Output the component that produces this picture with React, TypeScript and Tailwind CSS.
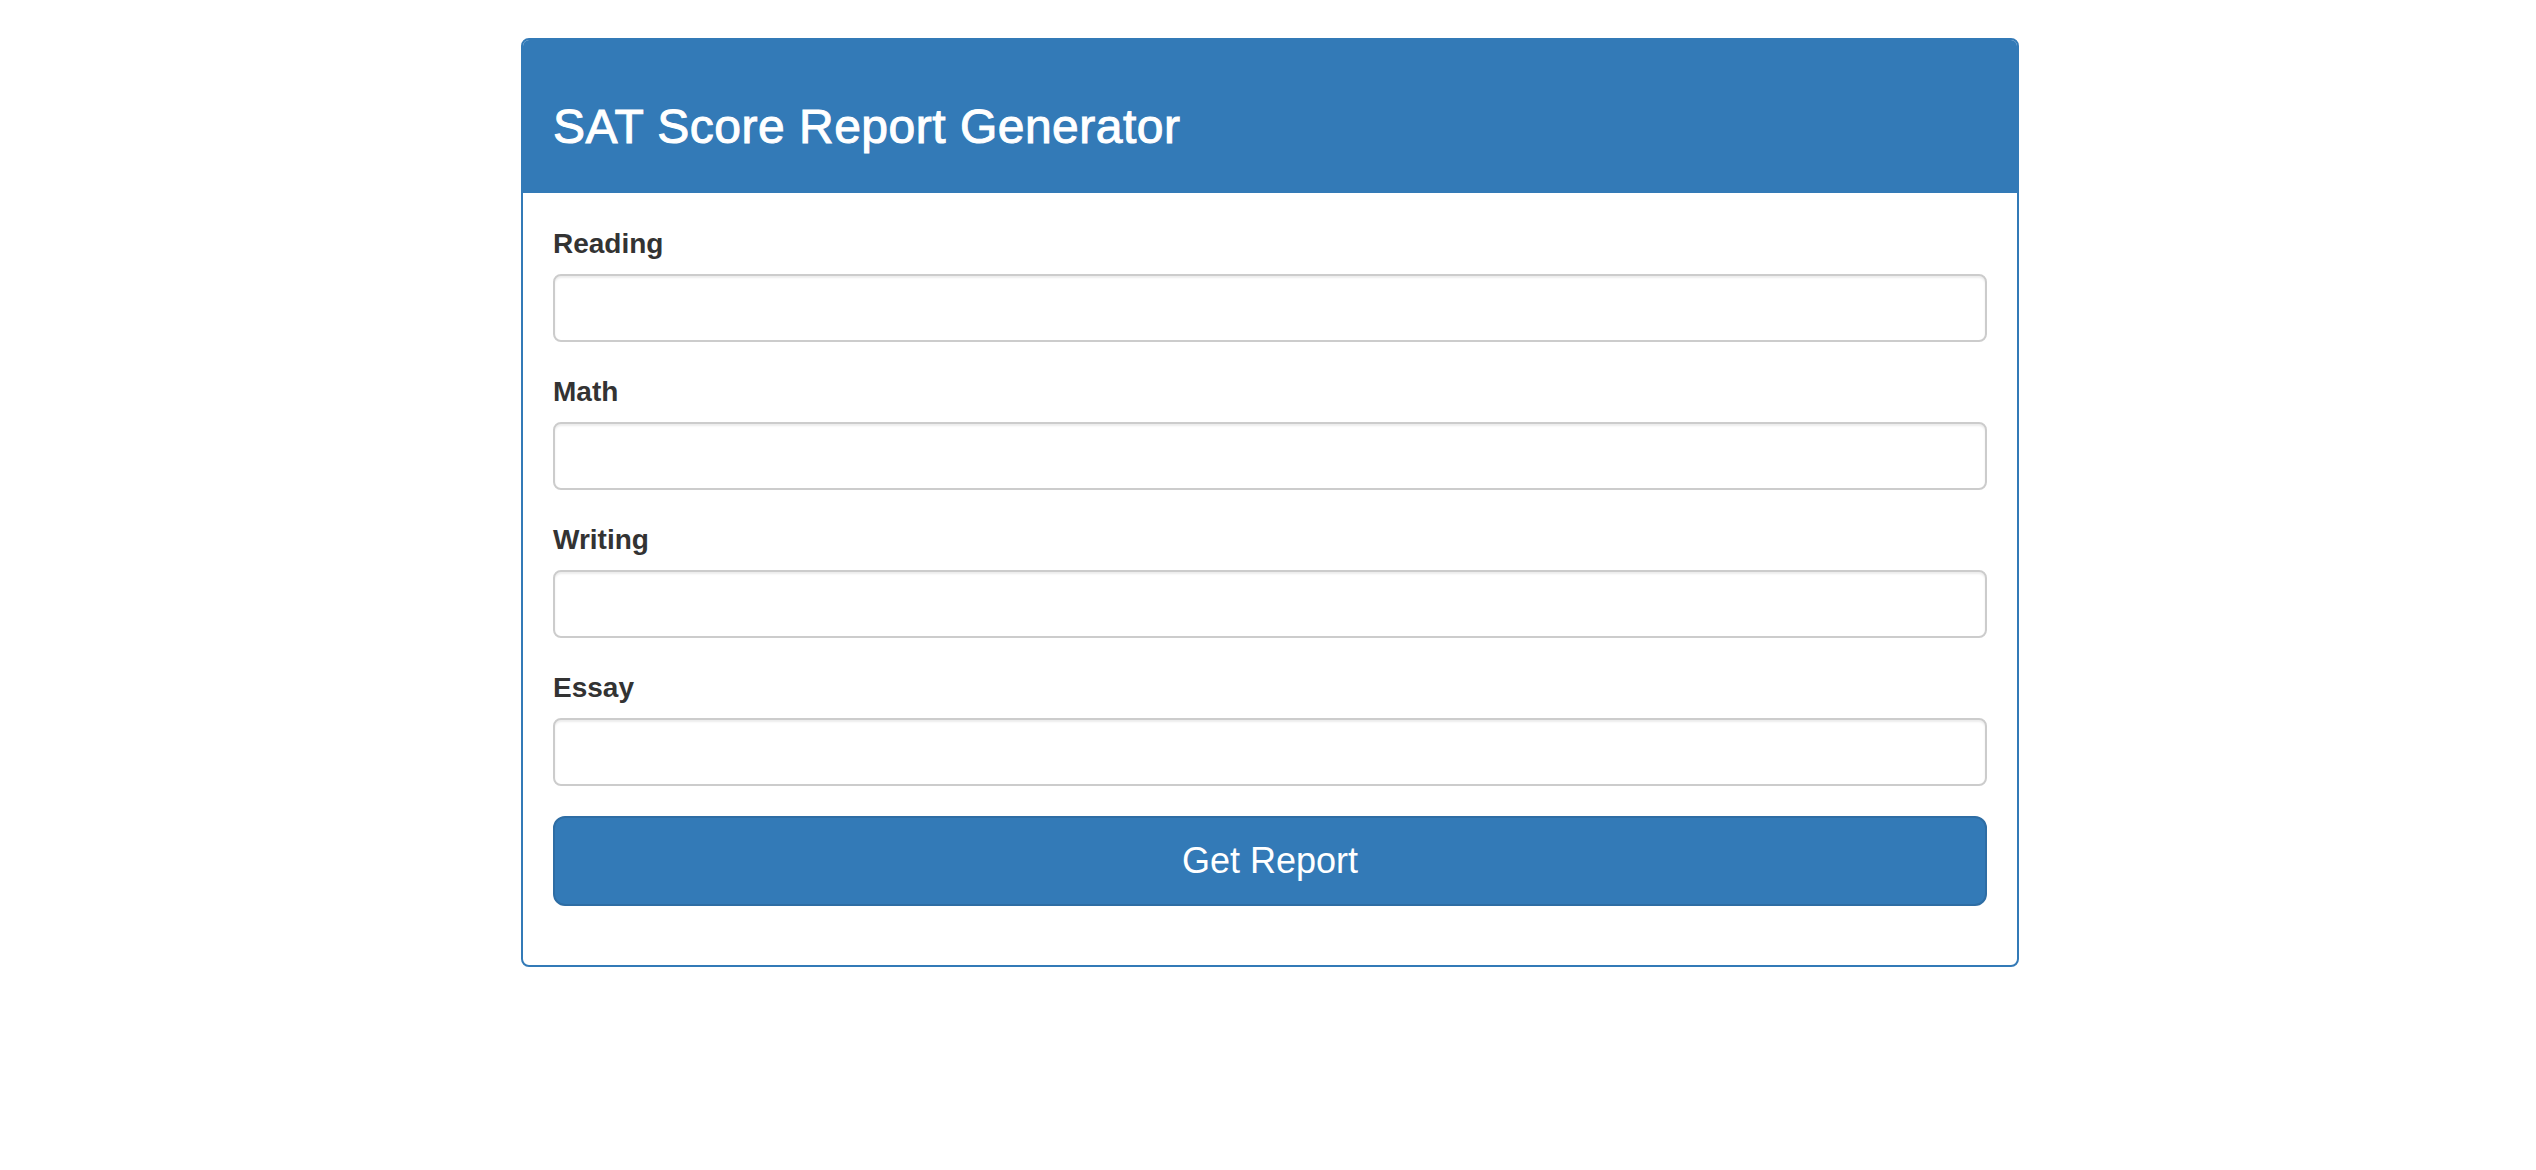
import React from "react";

const fields = ["Reading", "Math", "Writing", "Essay"];

export default function App() {
  return (
    <div className="min-h-screen w-full bg-white font-['Liberation_Sans',Arial,sans-serif] text-[#333]">
      <div className="h-[38px]" />
      <div className="ml-[521px] w-[1498px] overflow-hidden rounded-[8px] border-2 border-[#337ab7] bg-white">
        <div className="bg-[#337ab7] px-[30px] pt-[60px] pb-[40px]">
          <h3 className="text-[48px] leading-[53px] font-medium tracking-[0.5px] text-white [-webkit-text-stroke:1px_white]">
            SAT Score Report Generator
          </h3>
        </div>
        <div className="px-[30px] pt-[31px] pb-[29px]">
          {fields.map((f) => (
            <div key={f} className="mb-[30px]">
              <label className="mb-[10px] block text-[28px] leading-[40px] font-bold text-[#333]">{f}</label>
              <input
                type="text"
                className="block h-[68px] w-full rounded-[8px] border-2 border-[#ccc] bg-white px-[24px] text-[28px] shadow-[inset_0_2px_2px_rgba(0,0,0,0.075)] outline-none"
              />
            </div>
          ))}
          <div className="mb-[30px]">
            <button
              type="button"
              className="block h-[90px] w-full rounded-[12px] border-2 border-[#2e6da4] bg-[#337ab7] text-[36px] leading-[48px] text-white"
            >
              Get Report
            </button>
          </div>
        </div>
      </div>
    </div>
  );
}
